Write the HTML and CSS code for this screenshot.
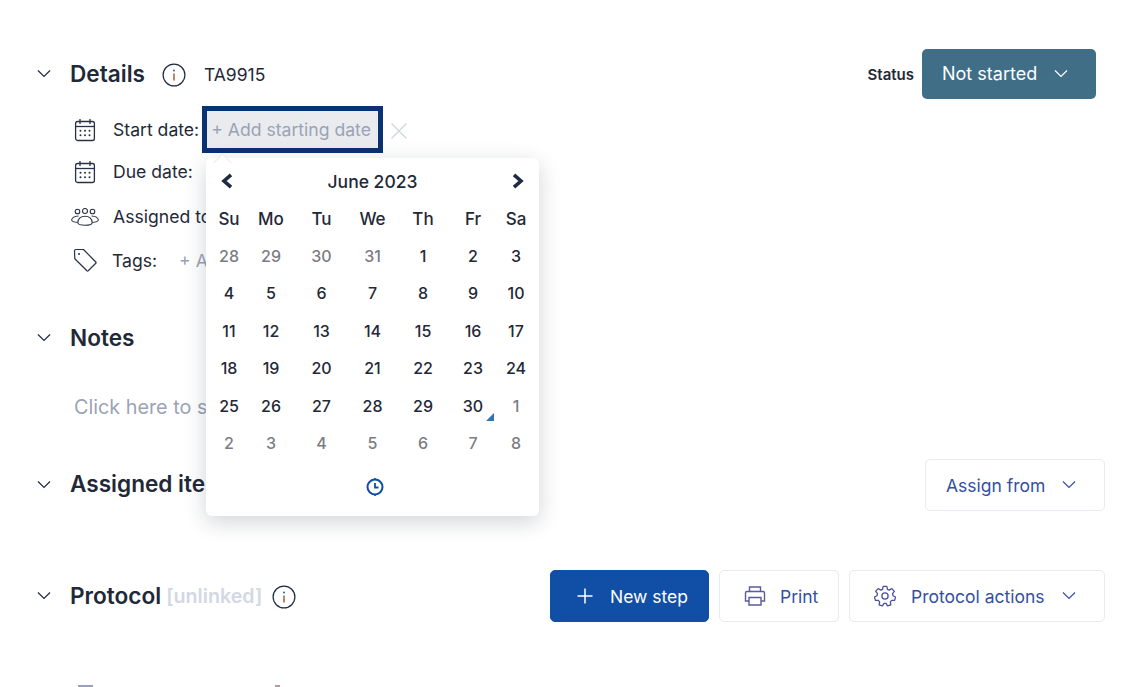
FILE: index.html
```html
<!DOCTYPE html>
<html lang="en">
<head>
<meta charset="utf-8">
<title>Task details</title>
<link rel="stylesheet" href="styles.css">
</head>
<body>
<svg class="defs" width="0" height="0" aria-hidden="true">
  <symbol id="chev" viewBox="0 0 16 16"><path d="M2 4.500 8 10.500l6-6" fill="none" stroke="currentColor" stroke-width="1.200"/></symbol>
  <symbol id="info" viewBox="0 0 24 24"><circle cx="12" cy="12" r="10.900" fill="none" stroke="#1f2a44" stroke-width="1.200"/><path d="M12 10.500v7" stroke="#a0522d" stroke-width="1.400"/><circle cx="12" cy="7.500" r=".9" fill="#1d4f9c"/></symbol>
  <symbol id="cal" viewBox="0 0 22 24"><path d="M6 1v5M16 1v5" stroke="#2a3146" stroke-width="1.300" fill="none"/><rect x="1.600" y="3.500" width="18.800" height="19" rx="2" fill="none" stroke="#2a3146" stroke-width="1.300"/><path d="M1.600 8.500h18.800" stroke="#2a3146" stroke-width="1.300"/><g fill="#2a3146"><circle cx="6.500" cy="12.800" r="1"/><circle cx="11" cy="12.800" r="1"/><circle cx="15.500" cy="12.800" r="1"/><circle cx="6.500" cy="17.300" r="1"/><circle cx="11" cy="17.300" r="1"/><circle cx="15.500" cy="17.300" r="1"/></g></symbol>
</svg>
<main class="page">
  <section class="details">
    <header class="head head-details">
      <svg class="chev"><use href="#chev"/></svg>
      <h2 class="title">Details</h2>
      <svg class="info"><use href="#info"/></svg>
      <span class="code">TA9915</span>
      <span class="status-label">Status</span>
      <button class="status-btn">Not started<svg class="chev-sm"><use href="#chev"/></svg></button>
    </header>
    <div class="row row-start">
      <svg class="ic"><use href="#cal"/></svg>
      <span class="label">Start date:</span>
      <span class="date-input">+ Add starting date</span>
      <svg class="clear" viewBox="0 0 18 18"><path d="M1.500 1.500l15 15M16.500 1.500l-15 15" stroke="#d3d9e2" stroke-width="1.500"/></svg>
    </div>
    <div class="row row-due">
      <svg class="ic"><use href="#cal"/></svg>
      <span class="label label-due">Due date:</span>
      <span class="placeholder">+ Add due date</span>
    </div>
    <div class="row row-assigned">
      <svg class="ic ic-wide" viewBox="0 0 28 18"><g fill="none" stroke="#2a3146" stroke-width="1.100"><circle cx="6.500" cy="3.500" r="2.300"/><circle cx="14" cy="3" r="2.500"/><circle cx="21.500" cy="3.500" r="2.300"/><path d="M7.500 8C4 8.200 1 10 .6 12c.3 1.300 2.700 2.200 6 2.500M20.500 8c3.500.2 6.500 2 6.900 4-.3 1.300-2.700 2.200-6 2.500"/><path d="M6.800 14.500C7.200 10.500 10 8.200 14 8.200s6.800 2.300 7.200 6.300c0 1.800-3 2.800-7.200 2.800s-7.200-1-7.200-2.800z"/></g></svg>
      <span class="label">Assigned to:</span>
      <span class="placeholder">+ Add</span>
    </div>
    <div class="row row-tags">
      <svg class="ic ic-tag" viewBox="0 0 24 24"><path d="M1.500 2.800C1.500 2 2.100 1.500 2.900 1.500H10.500L22.800 14a1 1 0 0 1 0 1.300l-7.600 7.500a1 1 0 0 1-1.300 0L1.800 10.800z" fill="none" stroke="#2a3146" stroke-width="1.200" stroke-linejoin="round"/><circle cx="6" cy="6" r="1" fill="#2a3146"/></svg>
      <span class="label label-tags">Tags:</span>
      <span class="placeholder">+ Add tags</span>
    </div>
  </section>

  <section class="notes">
    <header class="head">
      <svg class="chev"><use href="#chev"/></svg>
      <h2 class="title">Notes</h2>
    </header>
    <p class="note-text">Click here to start typing</p>
  </section>

  <section class="assigned">
    <header class="head head-tall">
      <svg class="chev"><use href="#chev"/></svg>
      <h2 class="title">Assigned items</h2>
      <div class="actions">
        <button class="btn btn-assign">Assign from<svg class="chev-sm"><use href="#chev"/></svg></button>
      </div>
    </header>
  </section>

  <section class="protocol">
    <header class="head head-tall">
      <svg class="chev"><use href="#chev"/></svg>
      <h2 class="title">Protocol</h2>
      <span class="unlinked">[unlinked]</span>
      <svg class="info"><use href="#info"/></svg>
      <div class="actions">
        <button class="btn btn-primary"><svg class="plus" viewBox="0 0 18 18"><path d="M9 1.500v15M1.500 9h15" stroke="#fff" stroke-width="1.500"/></svg>New step</button>
        <button class="btn btn-print"><svg class="btn-ic" viewBox="0 0 22 20"><g fill="none" stroke="#5b5a9a" stroke-width="1.400"><path d="M5.500 5.500V1h11v4.500"/><path d="M5 15H1.500V7a1.500 1.500 0 0 1 1.500-1.500h16A1.500 1.500 0 0 1 20.500 7v8H17"/><path d="M5 11.500h12V19H5z"/></g></svg>Print</button>
        <button class="btn btn-actions"><svg class="btn-ic" viewBox="0 0 24 24"><g fill="none" stroke="#4a4f9c" stroke-width="1.400" stroke-linejoin="round"><circle cx="12" cy="12" r="3.400"/><path d="M10 1.500h4l.7 3.200 2 .9 2.800-1.700 2.700 3-2 2.600.5 2.200 2.800 1.400-1 3.700-3.200-.1-1.500 1.700.6 3.200-3.600 1.200-1.700-2.800h-2.200l-1.700 2.800-3.600-1.200.6-3.200-1.500-1.700-3.200.1-1-3.700 2.800-1.400.5-2.200-2-2.600 2.700-3 2.800 1.700 2-.9z"/></g></svg>Protocol actions<svg class="chev-sm"><use href="#chev"/></svg></button>
      </div>
    </header>
  </section>

  <section class="peek">
    <span class="peek-bar"></span>
    <span class="peek-dot"></span>
  </section>
</main>

<div class="picker">
  <span class="caret"></span>
  <div class="picker-nav">
    <svg class="nav" viewBox="0 0 14 16"><path d="M11 1.800 4 8l7 6.200" fill="none" stroke="#1f2a44" stroke-width="3.600"/></svg>
    <span class="month">June 2023</span>
    <svg class="nav" viewBox="0 0 14 16"><path d="M3 1.800 10 8l-7 6.200" fill="none" stroke="#1f2a44" stroke-width="3.600"/></svg>
  </div>
  <div class="cal-grid">
    <b>Su</b><b>Mo</b><b>Tu</b><b>We</b><b>Th</b><b>Fr</b><b>Sa</b>
    <i>28</i><i>29</i><i>30</i><i>31</i><span>1</span><span>2</span><span>3</span>
    <span>4</span><span>5</span><span>6</span><span>7</span><span>8</span><span>9</span><span>10</span>
    <span>11</span><span>12</span><span>13</span><span>14</span><span>15</span><span>16</span><span>17</span>
    <span>18</span><span>19</span><span>20</span><span>21</span><span>22</span><span>23</span><span>24</span>
    <span>25</span><span>26</span><span>27</span><span>28</span><span>29</span><span class="today">30</span><i>1</i>
    <i>2</i><i>3</i><i>4</i><i>5</i><i>6</i><i>7</i><i>8</i>
  </div>
  <div class="picker-foot">
    <svg class="clock" viewBox="0 0 18 18"><circle cx="9" cy="9" r="7.500" fill="none" stroke="#0f4da8" stroke-width="2"/><path d="M9 5v4.500h3.500" fill="none" stroke="#0f4da8" stroke-width="1.800"/><path d="M9 0v1.500M9 16.500V18" stroke="#0f4da8" stroke-width="1.500"/></svg>
  </div>
</div>
</body>
</html>
```

FILE: styles.css
```css
* { box-sizing: border-box; }
html, body { margin: 0; height: 687px; overflow: hidden; background: #fff; }
body { font-family: Inter, "Liberation Sans", sans-serif; color: #1f2937; position: relative; }
.defs { position: absolute; }
.page { padding: 49px 17px 0 36px; width: 1122px; }
.head { display: flex; align-items: center; height: 50px; }
.head-tall { height: 52px; }
.chev { width: 16px; height: 16px; color: #1f2a44; flex: none; margin-right: 18px; }
.chev-sm { width: 16px; height: 16px; flex: none; margin-left: 16px; }
.title { font-size: 22.600px; font-weight: 600; margin: 0; color: #1f2937; line-height: 30px; }
.assigned .title { margin-bottom: 2px; }
.info { width: 24px; height: 24px; margin: 2px 0 0 17px; flex: none; }
.code { font-size: 17.500px; margin-left: 18px; color: #1f2937; }
.status-label { font-size: 15px; font-weight: 600; margin-left: auto; margin-right: 8px; color: #1f2937; }
.status-btn { display: flex; align-items: center; height: 50px; width: 174px; margin-right: 9px; border: 0; border-radius: 5px; background: #406e87; color: #fff; font: 400 18px Inter, sans-serif; padding: 0 0 1px 20px; }
.row { display: flex; align-items: center; padding-left: 38px; font-size: 17.600px; }
.row-start { height: 47px; margin-top: 7px; }
.row-due { height: 41px; margin-top: -2px; }
.row-assigned { height: 47px; margin-top: 1px; }
.row-tags { height: 42px; margin-top: -1px; }
.ic { width: 22px; height: 24px; flex: none; margin-right: 17px; }
.ic-wide { width: 28px; height: 18px; margin-left: -3px; margin-right: 14px; }
.ic-tag { width: 24px; height: 24px; margin-left: -1px; margin-right: 15px; }
.label { color: #1f2937; white-space: nowrap; }
.label-due { margin-right: 12px; }
.label-tags { margin-right: 22px; }
.date-input { display: flex; align-items: center; height: 47px; width: 181px; margin-left: 3px; border: 5px solid #0a3172; background: #e9ebef; color: #9aa3b5; padding-left: 4px; white-space: nowrap; }
.placeholder { color: #9aa3b5; white-space: nowrap; }
.clear { width: 18px; height: 18px; margin-left: 7px; margin-top: 2px; flex: none; }
.notes { margin-top: 32px; }
.note-text { margin: 32px 0 0 38px; font-size: 19.800px; line-height: 24px; color: #9aa3b5; }
.assigned { margin-top: 40px; }
.protocol { margin-top: 59px; }
.actions { display: flex; gap: 10px; margin-left: auto; }
.btn { display: flex; align-items: center; height: 52px; border-radius: 5px; border: 1px solid #e8eaef; background: #fff; color: #34509f; font: 400 17.500px Inter, sans-serif; padding: 0; }
.btn-assign { width: 180px; padding-left: 20px; }
.btn-primary { width: 159px; background: #114ea6; border-color: #114ea6; color: #fff; padding-left: 25px; }
.btn-print { width: 120px; padding-left: 24px; }
.btn-actions { width: 256px; padding-left: 24px; }
.plus { width: 18px; height: 18px; margin-right: 16px; }
.btn-ic { width: 22px; height: 22px; margin-right: 14px; flex: none; }
.btn-actions .btn-ic { margin-right: 15px; }
.unlinked { font-size: 19.700px; font-weight: 600; color: #d2d8e4; margin-left: 5px; }
.protocol .info { margin-left: 10px; }
.peek { display: flex; align-items: flex-start; padding-left: 42px; margin-top: 63px; height: 10px; }
.peek-bar { width: 15px; height: 3px; background: #9aa0bc; }
.peek-dot { width: 5px; height: 3px; margin-left: 182px; background: #b49aaf; }
.picker { position: absolute; left: 206px; top: 158px; width: 333px; height: 358px; background: #fff; border-radius: 6px; box-shadow: 0 6px 22px rgba(30, 40, 60, .2); padding: 6px; }
.caret { position: absolute; left: 9.500px; top: -2.500px; width: 13px; height: 13px; background: #fff; border: 1px solid #e8eaef; border-width: 1px 0 0 1px; transform: rotate(45deg); }
.picker-nav { position: relative; display: flex; align-items: center; justify-content: space-between; padding: 0 8px 0 8px; height: 34px; }
.nav { width: 14px; height: 16px; }
.month { font-size: 17.500px; font-weight: 500; color: #1f2937; }
.cal-grid { position: relative; display: grid; grid-template-columns: 34px 50px 51px 51px 50px 50px 36px; grid-auto-rows: 37.500px; margin-top: 2px; font-size: 16px; font-weight: 500; text-align: center; line-height: 37.500px; color: #1f2937; }
.cal-grid b { font-size: 17px; font-weight: 500; padding-top: 1px; }
.cal-grid i { font-style: normal; color: #7b7d84; }
.today { position: relative; }
.today::after { content: ""; position: absolute; right: 4px; bottom: 4px; border-style: solid; border-width: 0 0 8px 8px; border-color: transparent transparent #2f74b5 transparent; }
.picker-foot { display: flex; justify-content: center; margin-top: 15px; padding-left: 4px; }
.clock { width: 18px; height: 18px; }
```
